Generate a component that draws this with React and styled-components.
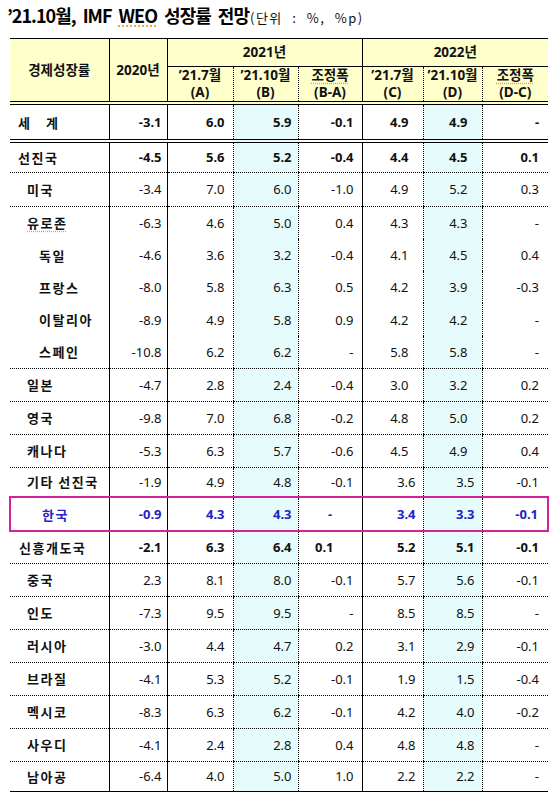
import React from 'react';
import styled, { createGlobalStyle } from 'styled-components';

const GlobalStyle = createGlobalStyle`
  body {
    margin: 0;
    background: #ffffff;
    font-family: "Noto Sans", "Noto Sans CJK KR", sans-serif;
    color: #111111;
  }
`;

const Page = styled.div`
  width: 558px;
`;

const TitleBar = styled.div`
  box-sizing: border-box;
  height: 38px;
  padding: 3px 0 0 7px;
  display: flex;
  align-items: baseline;
`;

const Title = styled.h1`
  margin: 0;
  font-family: "Noto Sans CJK KR", sans-serif;
  font-size: 18px;
  font-weight: 700;
  line-height: 25px;
  letter-spacing: -1px;
  word-spacing: 4px;
  color: #000;
`;

const Unit = styled.span`
  margin-left: 1px;
  font-family: "Noto Sans CJK KR", sans-serif;
  font-size: 13px;
  letter-spacing: 1.5px;
  word-spacing: 5px;
  color: #111;
`;

const Spell = styled.span`
  text-decoration: underline dotted #e0a040;
  text-underline-offset: 3px;
`;

const Table = styled.table`
  margin-left: 9px;
  width: 538px;
  border-collapse: collapse;
  table-layout: fixed;
`;

const HeadRow = styled.tr`
  height: ${p => p.$h}px;
`;

const Head = styled.th`
  padding: 0;
  background: #ffffcc;
  font-family: "Noto Sans", "Noto Sans CJK KR", sans-serif;
  font-size: 13.5px;
  font-weight: 700;
  line-height: 17px;
  text-align: center;
  color: #111;
  border-top: ${p => (p.$top ? '1px solid #000' : 'none')};
  border-left: ${p => (p.$line ? `1px ${p.$line} #000` : 'none')};
  border-bottom: ${p => p.$bottom || 'none'};
`;

const Row = styled.tr`
  height: ${p => p.$h}px;
`;

const Label = styled.td`
  padding: 0 0 0 ${p => p.$indent}px;
  font-family: "Noto Sans CJK KR", sans-serif;
  font-size: 13px;
  font-weight: 700;
  letter-spacing: 1.5px;
  white-space: nowrap;
  color: ${p => (p.$blue ? '#2323c8' : '#111')};
  border-bottom: ${p => p.$sep};
  border-top: ${p => p.$top || 'none'};
  border-left: ${p => p.$edge || 'none'};
`;

const Value = styled.td`
  padding: 0 ${p => p.$pad}px 0 0;
  text-align: ${p => p.$align};
  font-size: 13px;
  font-weight: ${p => (p.$bold ? 700 : 400)};
  white-space: nowrap;
  color: ${p => (p.$blue ? '#2323c8' : '#111')};
  background: ${p => (p.$fill ? '#e6fcfc' : 'transparent')};
  border-left: 1px ${p => p.$line} #000;
  border-bottom: ${p => p.$sep};
  border-top: ${p => p.$top || 'none'};
  border-right: ${p => p.$edge || 'none'};
`;

const PINK = '2px solid #d4229c';
const DOUBLE = '4px double #000';
const DOT = '1px dotted #000';

const columns = [
  { w: 99 },
  { w: 58, line: 'solid', pad: 5 },
  { w: 66, line: 'solid', pad: 8 },
  { w: 65, line: 'dotted', pad: 6, fill: true },
  { w: 64, line: 'dotted', pad: 8 },
  { w: 61, line: 'solid', pad: 14 },
  { w: 59, line: 'dotted', pad: 14, fill: true },
  { w: 66, line: 'dotted', pad: 9 },
];

const rows = [
  { name: '세\u3000계', indent: 8, bold: true, sep: DOUBLE, h: 38, v: ['-3.1', '6.0', '5.9', '-0.1', '4.9', '4.9', '-'] },
  { name: '선진국', indent: 8, bold: true, h: 31, v: ['-4.5', '5.6', '5.2', '-0.4', '4.4', '4.5', '0.1'] },
  { name: '미국', indent: 17, h: 34, v: ['-3.4', '7.0', '6.0', '-1.0', '4.9', '5.2', '0.3'] },
  { name: '유로존', indent: 17, spell: true, sep: 'none', h: 33, v: ['-6.3', '4.6', '5.0', '0.4', '4.3', '4.3', '-'] },
  { name: '독일', indent: 29, sep: 'none', h: 32, v: ['-4.6', '3.6', '3.2', '-0.4', '4.1', '4.5', '0.4'] },
  { name: '프랑스', indent: 29, sep: 'none', h: 32, v: ['-8.0', '5.8', '6.3', '0.5', '4.2', '3.9', '-0.3'] },
  { name: '이탈리아', indent: 29, sep: 'none', h: 33, v: ['-8.9', '4.9', '5.8', '0.9', '4.2', '4.2', '-'] },
  { name: '스페인', indent: 29, h: 32, v: ['-10.8', '6.2', '6.2', '-', '5.8', '5.8', '-'] },
  { name: '일본', indent: 17, h: 33, v: ['-4.7', '2.8', '2.4', '-0.4', '3.0', '3.2', '0.2'] },
  { name: '영국', indent: 17, h: 33, v: ['-9.8', '7.0', '6.8', '-0.2', '4.8', '5.0', '0.2'] },
  { name: '캐나다', indent: 17, h: 33, v: ['-5.3', '6.3', '5.7', '-0.6', '4.5', '4.9', '0.4'] },
  { name: '기타 선진국', indent: 17, near: true, h: 30, v: ['-1.9', '4.9', '4.8', '-0.1', '3.6', '3.5', '-0.1'] },
  { name: '한국', indent: 31, korea: true, bold: true, near: true, h: 34, v: ['-0.9', '4.3', '4.3', '-', '3.4', '3.3', '-0.1'] },
  { name: '신흥개도국', indent: 9, bold: true, near: true, h: 32, v: ['-2.1', '6.3', '6.4', '0.1', '5.2', '5.1', '-0.1'] },
  { name: '중국', indent: 17, near: true, h: 33, v: ['2.3', '8.1', '8.0', '-0.1', '5.7', '5.6', '-0.1'] },
  { name: '인도', indent: 17, near: true, h: 33, v: ['-7.3', '9.5', '9.5', '-', '8.5', '8.5', '-'] },
  { name: '러시아', indent: 17, near: true, h: 33, v: ['-3.0', '4.4', '4.7', '0.2', '3.1', '2.9', '-0.1'] },
  { name: '브라질', indent: 17, near: true, h: 33, v: ['-4.1', '5.3', '5.2', '-0.1', '1.9', '1.5', '-0.4'] },
  { name: '멕시코', indent: 17, near: true, h: 33, v: ['-8.3', '6.3', '6.2', '-0.1', '4.2', '4.0', '-0.2'] },
  { name: '사우디', indent: 17, near: true, h: 33, v: ['-4.1', '2.4', '2.8', '0.4', '4.8', '4.8', '-'] },
  { name: '남아공', indent: 17, near: true, sep: '1px solid #000', h: 30, v: ['-6.4', '4.0', '5.0', '1.0', '2.2', '2.2', '-'] },
];

// cells that sit off the usual right edge in the source table
const placement = (row, i) => {
  const col = columns[i + 1];
  if (row.korea && i === 3) return { align: 'center', pad: 0 };
  if (row.name === '신흥개도국' && i === 3) return { align: 'right', pad: 28 };
  if (row.near && (i === 4 || i === 5)) return { align: 'right', pad: 7 };
  return { align: 'right', pad: col.pad };
};

const DataRow = ({ row }) => {
  const sep = row.korea ? PINK : row.sep || DOT;
  const top = row.korea ? PINK : undefined;
  return (
    <Row $h={row.h}>
      <Label $indent={row.indent} $sep={sep} $top={top} $edge={row.korea ? PINK : undefined} $blue={row.korea}>
        {row.spell ? <Spell>{row.name}</Spell> : row.name}
      </Label>
      {row.v.map((val, i) => {
        const col = columns[i + 1];
        const { align, pad } = placement(row, i);
        return (
          <Value
            key={i}
            $line={col.line}
            $pad={pad}
            $align={align}
            $fill={col.fill}
            $bold={row.bold}
            $blue={row.korea}
            $sep={sep}
            $top={top}
            $edge={row.korea && i === 6 ? PINK : undefined}
          >
            {val}
          </Value>
        );
      })}
    </Row>
  );
};

const subHeads = [
  { a: '’21.7월', b: '(A)', line: 'solid' },
  { a: '’21.10월', b: '(B)', line: 'dotted' },
  { a: <Spell>조정폭</Spell>, b: '(B-A)', line: 'dotted' },
  { a: '’21.7월', b: '(C)', line: 'solid' },
  { a: '’21.10월', b: '(D)', line: 'dotted' },
  { a: <Spell>조정폭</Spell>, b: '(D-C)', line: 'dotted' },
];

const App = () => {
  return (
    <Page>
      <GlobalStyle />
      <TitleBar>
        <Title>
          ’21.10월, IMF <Spell>WEO</Spell> 성장률 전망
        </Title>
        <Unit>(단위 : %, %p)</Unit>
      </TitleBar>
      <Table>
        <colgroup>
          {columns.map((c, i) => (
            <col key={i} style={{ width: c.w }} />
          ))}
        </colgroup>
        <thead>
          <HeadRow $h={28}>
            <Head rowSpan={2} $top $bottom={DOUBLE}>경제성장률</Head>
            <Head rowSpan={2} $top $line="solid" $bottom={DOUBLE}>2020년</Head>
            <Head colSpan={3} $top $line="solid" $bottom="1px solid #000">2021년</Head>
            <Head colSpan={3} $top $line="solid" $bottom="1px solid #000">2022년</Head>
          </HeadRow>
          <HeadRow $h={36}>
            {subHeads.map((s, i) => (
              <Head key={i} $line={s.line} $bottom={DOUBLE}>
                {s.a}
                <br />
                {s.b}
              </Head>
            ))}
          </HeadRow>
        </thead>
        <tbody>
          {rows.map(r => (
            <DataRow key={r.name} row={r} />
          ))}
        </tbody>
      </Table>
    </Page>
  );
};

export default App;
